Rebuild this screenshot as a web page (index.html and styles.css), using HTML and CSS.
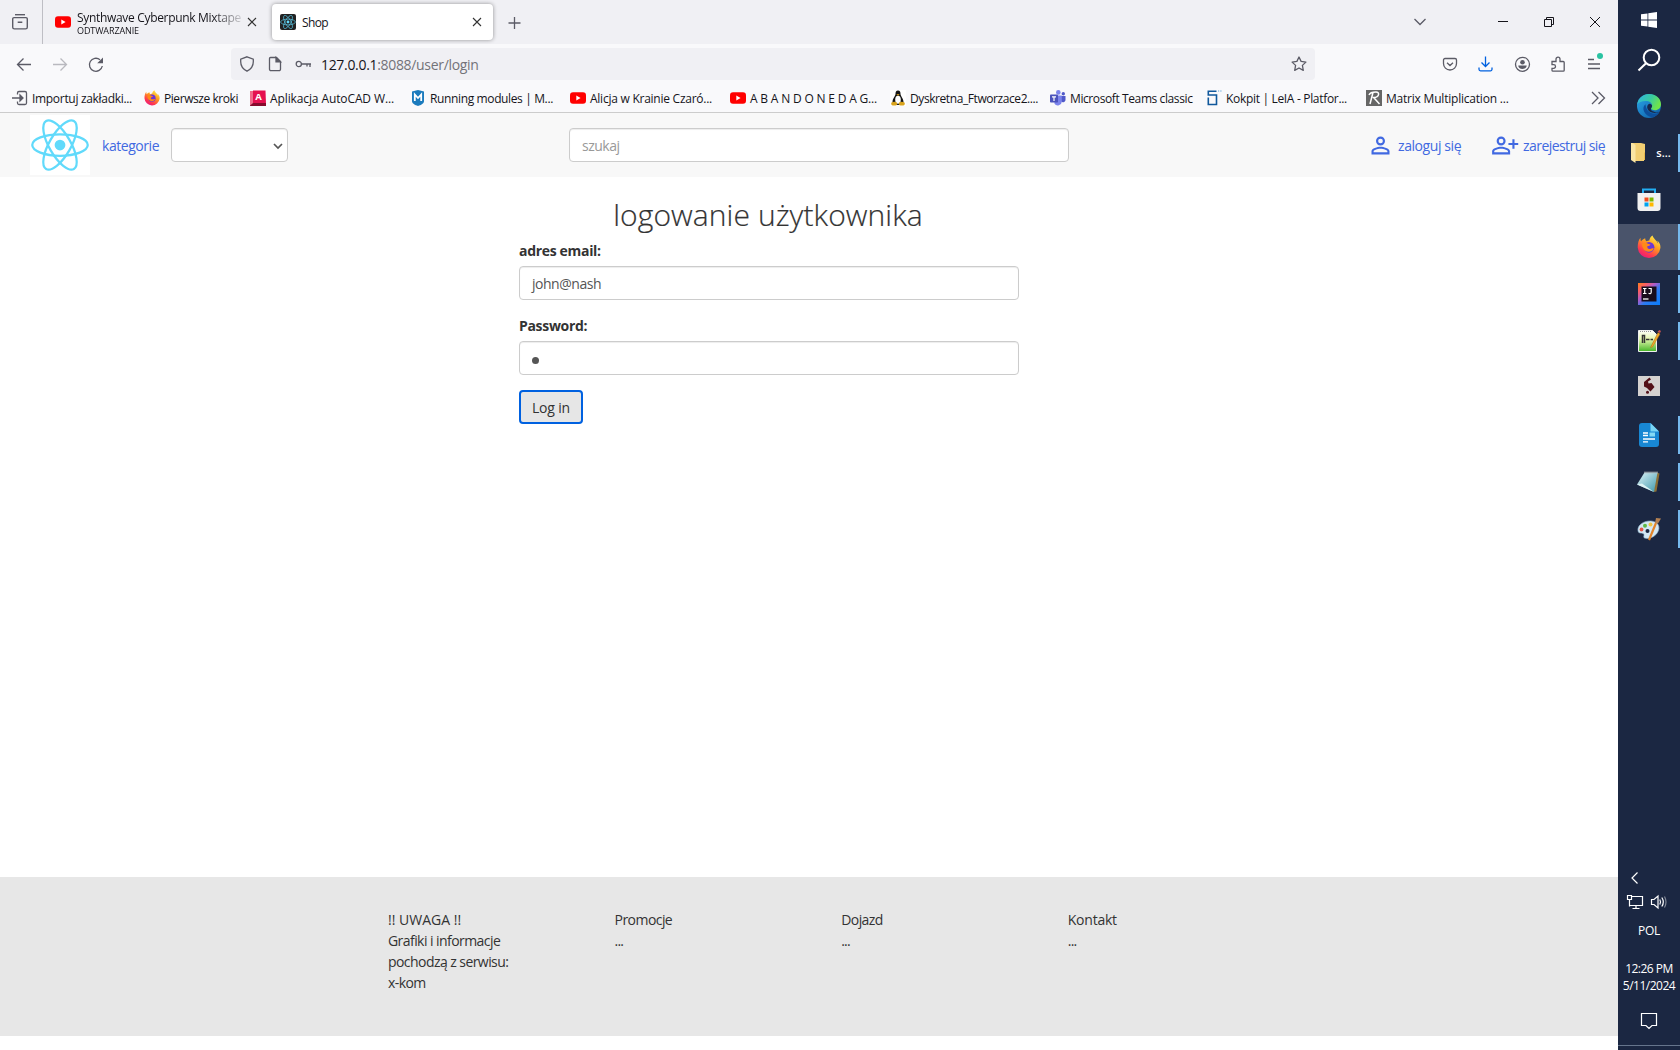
FILE: index.html
```html
<!DOCTYPE html>
<html lang="pl">
<head>
<meta charset="utf-8">
<title>Shop</title>
<link rel="stylesheet" href="styles.css">
</head>
<body>
<svg class="defs" width="0" height="0">
  <defs>
    <linearGradient id="ffOuter" x1=".8" y1="0" x2=".2" y2="1"><stop offset="0" stop-color="#fff44f"/><stop offset=".4" stop-color="#ff9a1f"/><stop offset=".75" stop-color="#ff3750"/><stop offset="1" stop-color="#e31587"/></linearGradient>
    <linearGradient id="edgeBlue" x1="0" y1="0" x2="1" y2="1"><stop offset="0" stop-color="#2aa7e8"/><stop offset="1" stop-color="#0c59a4"/></linearGradient>
    <linearGradient id="edgeGreen" x1="0" y1="0" x2="1" y2=".4"><stop offset="0" stop-color="#2fb4e6"/><stop offset=".6" stop-color="#3acb9d"/><stop offset="1" stop-color="#6fe34b"/></linearGradient>
    <linearGradient id="ijFrame" x1="0" y1="0" x2="1" y2="1"><stop offset="0" stop-color="#fc801d"/><stop offset=".2" stop-color="#fe5f60"/><stop offset=".4" stop-color="#b05bc8"/><stop offset=".6" stop-color="#2d7bf0"/><stop offset="1" stop-color="#087cfa"/></linearGradient>
    <linearGradient id="nppBg" x1="0" y1="0" x2="0" y2="1"><stop offset="0" stop-color="#fff"/><stop offset=".4" stop-color="#e6f7b0"/><stop offset="1" stop-color="#45b526"/></linearGradient>
    <linearGradient id="padBg" x1="0" y1="0" x2="1" y2="1"><stop offset="0" stop-color="#dff4f8"/><stop offset="1" stop-color="#3f99ad"/></linearGradient>
    <symbol id="youtube" viewBox="0 0 16 16"><rect y="2.300" width="16" height="11.400" rx="3" fill="#f00"/><path d="M6.300 5.500v5l4.300-2.500z" fill="#fff"/></symbol>
    <symbol id="close" viewBox="0 0 16 16"><path d="M4 4l8 8M12 4l-8 8" stroke="#333" stroke-width="1.100" fill="none"/></symbol>
    <symbol id="firefox" viewBox="0 0 24 24"><path d="M23 9.500c-.6-1.700-1.700-3.200-2.800-3.800.6 1.100.9 2.200 1 3C20 5.300 17 4.500 15.500.4c-2 1.200-3 3.200-3.200 5-1 0-2 .3-2.800.8-1-.7-1.400-2-1.300-3C6 4 4.800 5.300 4.200 6.200 3.600 5.700 3.400 4 3.500 2.800 1.600 4.700.7 8.500.7 12.500a11.400 11.400 0 0 0 22.700.5c.1-1.200 0-2.400-.4-3.500z" fill="url(#ffOuter)"/><circle cx="12" cy="12.300" r="5.400" fill="#6b37d6"/><path d="M5 9c2-1.800 4-1.700 6-.3l2.500.7c-.5 1.200-1.700 1.600-2.900 1.700-.8 1.500-.1 3 2.400 2.900 1.500 0 2.500-1 3.800-.5-1.100 2.500-3.200 3.500-5.700 3.200C7.500 16.300 5 13 5 9z" fill="#ff8a16"/></symbol>
    <symbol id="atom" viewBox="-12 -12 24 24"><circle r="2.150"/><g fill="none" stroke-width=".9"><ellipse rx="11.100" ry="4.300"/><ellipse rx="11.100" ry="4.300" transform="rotate(60)"/><ellipse rx="11.100" ry="4.300" transform="rotate(120)"/></g></symbol>
  </defs>
</svg>
<div class="screen">
  <div class="window">
    <header class="tabstrip">
      <div class="tabview"><svg width="18" height="18" viewBox="0 0 18 18"><path d="M4 1.700h10" /><path d="M3 4.600h12a1.300 1.300 0 0 1 1.300 1.300v8.300a1.700 1.700 0 0 1-1.700 1.700H3.400a1.700 1.700 0 0 1-1.700-1.700V5.900A1.300 1.300 0 0 1 3 4.600zM6.700 9.300h4.600"/></svg></div>
      <div class="tab">
        <svg class="i16"><use href="#youtube"/></svg>
        <div class="tab-text"><span class="tab-title">Synthwave Cyberpunk Mixtape</span><span class="tab-sub">ODTWARZANIE</span></div>
        <svg class="i16 tab-close"><use href="#close"/></svg>
      </div>
      <div class="tab active">
        <span class="favicon"><svg class="i16"><use href="#atom"/></svg></span>
        <span class="tab-name">Shop</span>
        <svg class="i16"><use href="#close"/></svg>
      </div>
      <svg class="newtab line" width="16" height="16" viewBox="0 0 16 16"><path d="M8.500 2v12M2.500 8h12"/></svg>
      <div class="wincontrols">
        <svg class="line" width="16" height="16" viewBox="0 0 16 16"><path d="M2.500 5l5.500 5.500L13.500 5"/></svg>
        <svg class="ctl" width="16" height="16" viewBox="0 0 16 16"><path d="M3 7.500h10"/></svg>
        <svg class="ctl" width="16" height="16" viewBox="0 0 16 16"><path d="M3.500 5.500h7v7h-7zM5.500 5.500v-2h7v7h-2"/></svg>
        <svg class="ctl" width="16" height="16" viewBox="0 0 16 16"><path d="M3 3l10 10M13 3L3 13"/></svg>
      </div>
    </header>
    <div class="toolbar">
      <div class="navbuttons">
        <svg class="line" width="16" height="16" viewBox="0 0 16 16"><path d="M15 8.500H1.500M7.500 2.500l-6 6 6 6"/></svg>
        <svg class="line faded" width="16" height="16" viewBox="0 0 16 16"><path d="M1 8.500h13.500M8.500 2.500l6 6-6 6"/></svg>
        <svg class="line" width="16" height="16" viewBox="0 0 16 16"><path d="M14.300 10A6.500 6.500 0 1 1 12 3.700"/><path d="M15 1.500v5.800H9.200z" fill="#5b5b66" stroke="none"/></svg>
      </div>
      <div class="urlbar">
        <svg class="line" width="16" height="16" viewBox="0 0 16 16"><path d="M8 .8l6.300 2.400v2.600c0 4-2.300 7.400-6.300 9.400-4-2-6.300-5.400-6.300-9.400V3.200z"/></svg>
        <svg class="line" width="16" height="16" viewBox="0 0 16 16"><path d="M3.500 1.500h6l4 4v7.700a1.500 1.500 0 0 1-1.500 1.500H4A1.500 1.500 0 0 1 2.500 13.200V2.500a1 1 0 0 1 1-1z"/><path d="M9 1.500v4.400h4.500z" fill="#5b5b66"/></svg>
        <svg class="line" width="18" height="16" viewBox="0 0 18 16"><circle cx="3.800" cy="8" r="2.600"/><path d="M6.400 8H16M15 8v3M12 8v2.500"/></svg>
        <span class="url"><b>127.0.0.1</b>:8088/user/login</span>
        <svg class="line star" width="16" height="16" viewBox="0 0 16 16"><path d="M8 1l2.100 4.400 4.800.7-3.500 3.300.9 5L8 12l-4.300 2.400.9-5L1.100 6.100l4.800-.7z" stroke-linejoin="round"/></svg>
      </div>
      <div class="actions">
        <svg class="line" width="16" height="16" viewBox="0 0 16 16"><path d="M3 2.500h10a1.500 1.500 0 0 1 1.500 1.500v3.500a6.500 6.500 0 0 1-13 0V4A1.500 1.500 0 0 1 3 2.500zM5 6.700l3 2.800 3-2.800"/></svg>
        <svg class="line blue" width="16" height="16" viewBox="0 0 16 16"><path d="M7.500.5v10M3.500 6.500l4 4 4-4M1 11.500v1.800a1.500 1.500 0 0 0 1.500 1.500h10a1.500 1.500 0 0 0 1.500-1.500v-1.800"/></svg>
        <svg class="line" width="16" height="16" viewBox="0 0 16 16"><circle cx="8.500" cy="8.300" r="7"/><circle cx="8.500" cy="6.200" r="2.300" fill="#5b5b66" stroke="none"/><path d="M4.300 9.600h8.400c0 2-1.700 3.500-4.200 3.500s-4.200-1.500-4.200-3.500z" fill="#5b5b66" stroke="none"/></svg>
        <svg class="line" width="16" height="16" viewBox="0 0 16 16"><path d="M2 5.500h4V3.200a2 2 0 0 1 4 0v2.300h3.200a1 1 0 0 1 1 1v7.700a1 1 0 0 1-1 1H3a1 1 0 0 1-1-1v-1.900h1.700a1.800 1.800 0 0 0 0-3.600H2z"/></svg>
        <span class="menu"><svg class="line" width="16" height="16" viewBox="0 0 16 16"><path d="M2 3.500h6M2 8h12M2 12.500h12"/></svg><i></i></span>
      </div>
    </div>
    <nav class="bookmarks">
      <span class="bm b1"><svg class="i16 line" viewBox="0 0 16 16"><path d="M5.500 4.500V3A1.500 1.500 0 0 1 7 1.500h6A1.500 1.500 0 0 1 14.500 3v10a1.500 1.500 0 0 1-1.500 1.500H7A1.500 1.500 0 0 1 5.500 13v-1.500M0 8h10.500"/><path d="M8 5l3 3-3 3z" fill="#5b5b66"/></svg><span>Importuj zakładki...</span></span>
      <span class="bm b2"><svg class="i16"><use href="#firefox"/></svg><span>Pierwsze kroki</span></span>
      <span class="bm b3"><svg class="i16" viewBox="0 0 16 16"><path d="M0 1h3.500v12L0 16z" fill="#f06a8b"/><path d="M3 .5h12.500L16 14H3z" fill="#e51050"/><path d="M0 15.500L3 13h13v3H0z" fill="#860a2c"/><text x="5.300" y="10" class="acad">A</text></svg><span>Aplikacja AutoCAD W...</span></span>
      <span class="bm b4"><svg class="i16" viewBox="0 0 16 16"><path d="M2 1.500L8 0l6 1.500V11c0 2.500-3 4-6 5-3-1-6-2.500-6-5z" fill="#1b7bbd"/><path d="M4.800 11V4.500L8 8l3.200-3.500V11" fill="none" stroke="#fff" stroke-width="1.800"/></svg><span>Running modules | M...</span></span>
      <span class="bm b5"><svg class="i16"><use href="#youtube"/></svg><span>Alicja w Krainie Czaró...</span></span>
      <span class="bm b6"><svg class="i16"><use href="#youtube"/></svg><span>A B A N D O N E D A G...</span></span>
      <span class="bm b7"><svg class="i16" viewBox="0 0 16 16"><path fill="#fff" d="M0 0h16v16H0z"/><path d="M8 .5c2 0 2.500 1.500 2.500 3.500 0 2 3 4.500 3 8 0 2-2 3-5.500 3s-5.500-1-5.500-3c0-3.500 3-6 3-8S6 .5 8 .5z" fill="#151515"/><ellipse cx="8" cy="9.700" rx="2.800" ry="4" fill="#fff"/><path d="M6.300 4.200h3.400L8 5.800z" fill="#f3b21b"/><ellipse cx="4.200" cy="13.700" rx="3" ry="1.900" fill="#d9a31c"/><ellipse cx="11.800" cy="13.700" rx="3" ry="1.900" fill="#d9a31c"/></svg><span>Dyskretna_Ftworzace2....</span></span>
      <span class="bm b8"><svg class="i16" viewBox="0 0 16 16"><circle cx="13.300" cy="3.800" r="1.700" fill="#5059c9"/><circle cx="8.300" cy="2.400" r="2.300" fill="#7b83eb"/><path d="M11 6h4.500v4.200a2.500 2.500 0 0 1-4.500 1z" fill="#5059c9"/><path d="M4.500 5.500h7.300v6.200a4 4 0 0 1-7.300 2z" fill="#7b83eb"/><rect y="4.500" width="8" height="8" rx=".8" fill="#4b53bc"/><path d="M2 6.800h4M4 6.800v4.200" stroke="#fff" stroke-width="1.200"/></svg><span>Microsoft Teams classic</span></span>
      <span class="bm b9"><svg class="i16" viewBox="0 0 16 16"><path d="M10.500 1.300H2.300V5h8.200v9.500H2.300V7.500" fill="none" stroke="#10589c" stroke-width="1.600"/><path d="M12 1h1.200M14.300 1h1.200" stroke="#5aa2d6"/></svg><span>Kokpit | LeIA - Platfor...</span></span>
      <span class="bm b10"><svg class="i16" viewBox="0 0 16 16"><path fill="#666" d="M0 0h16v16H0z"/><path d="M3 5c1-2.500 4-3 7-3 4 0 3.500 5-2.300 5.600L13.500 14M7 2.500L4 14" fill="none" stroke="#fff" stroke-width="1.500"/></svg><span>Matrix Multiplication ...</span></span>
      <svg class="line more" width="16" height="16" viewBox="0 0 16 16"><path d="M2 2l6 6-6 6M8.500 2l6 6-6 6"/></svg>
    </nav>
    <div class="page">
      <nav class="shopnav">
        <span class="logo"><svg width="60" height="60"><use href="#atom"/></svg></span>
        <a class="cat">kategorie</a>
        <span class="select"><svg width="10" height="8" viewBox="0 0 10 8"><path d="M1 2l4 4 4-4" fill="none" stroke="#555" stroke-width="1.700"/></svg></span>
        <span class="field search">szukaj</span>
        <a class="login"><svg width="27" height="27" viewBox="0 0 24 24"><path d="M12 5.900a2.100 2.100 0 1 1 0 4.200 2.100 2.100 0 0 1 0-4.200m0 9c2.970 0 6.100 1.460 6.100 2.100v1.100H5.900V17c0-.64 3.130-2.100 6.100-2.100M12 4C9.790 4 8 5.790 8 8s1.790 4 4 4 4-1.790 4-4-1.790-4-4-4zm0 9c-2.670 0-8 1.340-8 4v3h16v-3c0-2.660-5.330-4-8-4z"/></svg><span>zaloguj się</span></a>
        <a class="register"><svg width="27" height="27" viewBox="0 0 24 24"><path d="M9 5.900a2.100 2.100 0 1 1 0 4.200 2.100 2.100 0 0 1 0-4.200m0 9c2.970 0 6.100 1.460 6.100 2.100v1.100H2.900V17c0-.64 3.130-2.100 6.100-2.100M9 4C6.790 4 5 5.790 5 8s1.790 4 4 4 4-1.790 4-4-1.790-4-4-4zm0 9c-2.670 0-8 1.340-8 4v3h16v-3c0-2.660-5.330-4-8-4zM19 6.500v3.200h-3.500v1.900H19v3.200h1.900v-3.200h3.300V9.700h-3.300V6.500z"/></svg><span>zarejestruj się</span></a>
      </nav>
      <main>
        <form class="loginform">
          <h2>logowanie użytkownika</h2>
          <label>adres email:</label>
          <div class="field email">john@nash</div>
          <label class="second">Password:</label>
          <div class="field"><i class="dot"></i></div>
          <div class="btn">Log in</div>
        </form>
      </main>
      <footer>
        <div><p class="notice">!! UWAGA !!</p><p>Grafiki i informacje</p><p>pochodzą z serwisu:</p><p>x-kom</p></div>
        <div><p>Promocje</p><p class="dots">...</p></div>
        <div><p>Dojazd</p><p class="dots">...</p></div>
        <div><p class="contact">Kontakt</p><p class="dots">...</p></div>
      </footer>
    </div>
  </div>
  <aside class="taskbar">
    <span class="s-win"><svg width="16" height="16" viewBox="0 0 16 16"><path d="M0 2.300l6.500-.9v6.100H0zM7.300 1.300L16 0v7.500H7.300zM0 8.400h6.500v6.200L0 13.700zM7.300 8.400H16V16l-8.700-1.200z" fill="#fff"/></svg></span>
    <span class="s-search"><svg width="24" height="24" viewBox="0 0 24 24"><circle cx="14.500" cy="9.500" r="7.800"/><path d="M9 15.200L1.500 22.500"/></svg></span>
    <span class="s-edge"><svg width="24" height="24" viewBox="0 0 24 24"><circle cx="12" cy="12" r="12" fill="url(#edgeBlue)"/><path d="M.2 10.500C1 4.500 6 0 12 0c7 0 12 4.800 12 10.300 0 3.700-2.800 6-6 6-2.500 0-4-1-4-1.700 0-.6 1.100-1.300 1.100-3C15.100 9 12.500 7 8.700 7 4.500 7 1.500 8.500.2 10.500z" fill="url(#edgeGreen)"/><path d="M8.500 10.300C4 13.500 7 22 15.500 23.400c3-.8 5.300-2.600 6.700-4.900-6 3-13 .3-13.700-8.200z" fill="#0d4f9c"/><path d="M12.200 9.700c-4 2.300-2 8.700 5.300 9.300 2.200 0 4-.5 5-1.200-.7 0-1.800.6-3.500.4-3.500-.3-5.700-2.200-5-3.600.6-.9 1.100-1.500 1.100-3-.3-1-1.500-1.900-2.900-1.900z" fill="#17284b"/></svg></span>
    <span class="slot on folder"><svg width="15" height="20" viewBox="0 0 15 20"><path d="M3 1h11v16H3z" fill="#e8b94c"/><path d="M0 0h10l4 1v8l-1 1v8H4z" fill="#f3cf72"/><path d="M0 0h1.500l3 2v18L0 17z" fill="#fbe6a4"/></svg><b>s...</b></span>
    <span class="slot"><svg width="24" height="24" viewBox="0 0 24 24"><path d="M6 5.500V1.500h12v4" fill="none" stroke="#22aef2" stroke-width="2"/><path d="M.5 5h23v15a3 3 0 0 1-3 3h-17a3 3 0 0 1-3-3z" fill="#f1f1f1"/><path fill="#f04e1f" d="M7.500 9.500h4v4h-4z"/><path fill="#7db900" d="M12.500 9.500h4v4h-4z"/><path fill="#00a3ee" d="M7.500 14.500h4v4h-4z"/><path fill="#ffb800" d="M12.500 14.500h4v4h-4z"/></svg></span>
    <span class="slot on current"><svg width="24" height="24"><use href="#firefox"/></svg></span>
    <span class="slot on"><svg width="22" height="22" viewBox="0 0 22 22"><path fill="url(#ijFrame)" d="M0 0h22v22H0z"/><path d="M3.500 3.500h15v15h-15z" fill="#170d1c"/><path d="M5 5.500h3.500M6.700 5.500v5M5 10.500h3.500M10.500 5.500h2.700v3.800c0 1.500-1.500 1.500-2.700 1" stroke="#fff" stroke-width="1.200" fill="none"/><path d="M5 16h5.500" stroke="#ddd" stroke-width="1.500"/></svg></span>
    <span class="slot on"><svg width="24" height="24" viewBox="0 0 24 24"><path d="M1.500 1.500h14l4 4v17h-18z" fill="url(#nppBg)" stroke="#eee"/><path d="M3 2.500h12" stroke="#999" stroke-dasharray="1 1"/><path d="M5.500 14V6.500h2V14M9 10.500h3.500M13.500 10.500H16" stroke="#333" stroke-width="1.500" fill="none"/><path d="M13.500 18.500l7.500-15 2 1.500-7.500 13z" fill="#f0a928" stroke="#ad6c16" stroke-width=".5"/><path d="M20.500 2.500l2.500 1.500 1-2-1.500-1z" fill="#c55353"/></svg></span>
    <span class="slot script"><svg width="22" height="20" viewBox="0 0 22 20"><path fill="#d5d2d0" d="M0 0h22v20H0z"/><path d="M11.500 1.500l1.500 2-3 2 .5 2 3-.5 3 4-4 4.500-3.500-3.500-3-1.500V6z" fill="#531017"/><circle cx="9.500" cy="16.300" r="1.500" fill="#531017"/></svg></span>
    <span class="slot on"><svg width="20" height="24" viewBox="0 0 20 24"><path d="M3 0h8.500L20 8.500V21a3 3 0 0 1-3 3H3a3 3 0 0 1-3-3V3a3 3 0 0 1 3-3z" fill="#1887d3"/><path d="M11.500 0L20 8.500h-8.500z" fill="#79d5f5"/><path d="M4 10h5M4 12.500h5M4 16h12M4 18.800h5" stroke="#fff" stroke-width="1.300"/><path fill="#83d9f5" d="M10.500 9.500H16v4h-5.500z"/></svg></span>
    <span class="slot on"><svg width="24" height="24" viewBox="0 0 24 24"><path d="M19.500 2.500l3 1-3 18-3 .5z" fill="#8b6e35"/><path d="M7.500 2.500h13L17 22 0 14.500z" fill="url(#padBg)"/><path d="M0 14.500l5-1L17 22z" fill="#def2f4"/><path d="M7.500 2.500h13" stroke="#bbb" stroke-width="2" stroke-dasharray="1 1"/></svg></span>
    <span class="slot on"><svg width="24" height="24" viewBox="0 0 24 24"><path d="M1 14C0 8 7 3.500 14 4c7 .4 10 6 6.500 11.500-3 5-9.500 7-13 5.500-2-1 1-3.700-1.500-4.500-2-.5-4.500 0-5-2.500z" fill="#d3e8f4" stroke="#8fb4cd" stroke-width=".6"/><circle cx="4.500" cy="12.500" r="1.900" fill="#e45749"/><circle cx="8" cy="8.700" r="2" fill="#5fb946"/><circle cx="13.500" cy="7.500" r="2" fill="#efc444"/><circle cx="10.500" cy="14" r="2" fill="#1b2742"/><path d="M12 23l7-17" stroke="#e2852b" stroke-width="2.200"/><path d="M18 6l1-5 5 .5-3 5z" fill="#b28052"/></svg></span>
    <div class="tray">
      <svg width="62" height="14" viewBox="0 0 62 14"><path d="M19.500 1.500L14 7l5.500 5.500"/></svg>
      <svg class="sys" width="62" height="16" viewBox="0 0 62 16"><path d="M9.500 1.500h4v4h-4zM11.500 5.500v7M14 2.500h10.500v9H12M18 12v2.500M14.500 14.500h7"/><path d="M33.500 5.500h2.500l4-3.500v12l-4-3.500h-2.500z"/><path d="M41.800 5.500q1.500 2.500 0 5M43.800 3.500q3 4.500 0 9"/><path d="M46.500 2.500q3 5.500 0 11" opacity=".45"/></svg>
      <span class="lang">POL</span>
      <span class="clock">12:26 PM</span>
      <span class="clock">5/11/2024</span>
      <svg class="notify" width="18" height="18" viewBox="0 0 18 18"><path d="M1.500 1.500h15v12H12l-3 3-3-3H1.500z"/></svg>
    </div>
    <div class="showdesktop"></div>
  </aside>
</div>
</body>
</html>
```
FILE: styles.css
```css
* { box-sizing: border-box; }
body { margin: 0; font-family: "Open Sans", "Noto Sans", sans-serif; font-size: 12px; color: #15141a; white-space: nowrap; }
p, h2 { margin: 0; }
svg { display: block; flex: none; overflow: visible; }
.defs { position: absolute; }
.i16 { width: 16px; height: 16px; }
.line { fill: none; stroke: #5b5b66; stroke-width: 1.3; }
.screen { display: flex; width: 1680px; height: 1050px; overflow: hidden; }
.window { width: 1618px; display: flex; flex-direction: column; background: #fff; }

.tabstrip { height: 44px; background: #f0f0f4; display: flex; align-items: center; }
.tabview { width: 43px; height: 44px; padding: 13px 0 0 11px; border-right: 1px solid #bebec4; }
.tabview svg { fill: none; stroke: #5b5b66; stroke-width: 1.4; }
.tab { width: 221px; height: 36px; display: flex; align-items: center; padding-left: 12px; }
.tab-text { display: flex; flex-direction: column; width: 164px; margin: 2px 3px 0 6px; overflow: hidden; -webkit-mask-image: linear-gradient(90deg, #000 135px, transparent 170px); mask-image: linear-gradient(90deg, #000 135px, transparent 170px); }
.tab-title { font-size: 12px; line-height: 15px; letter-spacing: -.32px; }
.tab-sub { font-size: 9px; line-height: 12px; letter-spacing: -.11px; }
.tab.active { margin-left: 8px; padding-left: 8px; background: #fff; border-radius: 4px; box-shadow: 0 0 4px rgba(0,0,0,.4); }
.favicon { background: #222; border-radius: 2px; fill: #61dafb; stroke: #61dafb; stroke-width: 0; }
.tab-name { margin: 1px 0 0 6px; width: 167px; letter-spacing: -.6px; }
.newtab { margin: 1px 0 0 13px; }
.wincontrols { margin-left: auto; display: flex; padding-right: 15px; gap: 30px; }
.wincontrols .line { margin-right: 37px; }
.ctl { fill: none; stroke: #15141a; stroke-width: 1; }

.toolbar { height: 40px; background: #f9f9fb; display: flex; align-items: center; }
.navbuttons { width: 231px; padding-left: 16px; display: flex; gap: 20px; }
.faded { opacity: .4; }
.urlbar { width: 1084px; height: 32px; background: #f0f0f4; border-radius: 4px; display: flex; align-items: center; gap: 12px; padding: 0 8px; }
.url { font-size: 14px; color: #737379; margin: 1px 0 0 -4px; letter-spacing: -.32px; }
.url b { font-weight: 400; color: #15141a; }
.star { margin-left: auto; }
.actions { margin-left: 127px; display: flex; gap: 20px; }
.blue { stroke: #0061e0; }
.menu { position: relative; }
.menu i { position: absolute; right: -1px; top: -3px; width: 6px; height: 6px; border-radius: 50%; background: #2ac3a2; }

.bookmarks { height: 29px; background: #f9f9fb; border-bottom: 1px solid #ccc; display: flex; align-items: center; padding-left: 12px; }
.bm { display: flex; align-items: center; gap: 4px; height: 28px; }
.bm > span { margin-top: 1px; }
.b1 { width: 132px; letter-spacing: -.31px; }
.b2 { width: 106px; letter-spacing: -.44px; }
.b3 { width: 160px; letter-spacing: -.11px; }
.b4 { width: 160px; letter-spacing: -.37px; }
.b5 { width: 160px; letter-spacing: -.25px; }
.b6 { width: 160px; letter-spacing: -.18px; }
.b7 { width: 160px; letter-spacing: -.42px; }
.b8 { width: 156px; letter-spacing: -.4px; }
.b9 { width: 160px; letter-spacing: -.32px; }
.b10 { width: 145px; letter-spacing: -.21px; }
.acad { font: 700 9.5px "Open Sans", sans-serif; fill: #fff; }
.more { margin: 0 12px 0 auto; }

.page { flex: 1; display: flex; flex-direction: column; font-size: 14px; color: #333; }
.shopnav { height: 64px; background: #f8f8f8; display: flex; align-items: center; padding: 0 10px 0 30px; color: #4169e1; }
.logo { width: 60px; height: 60px; background: #fff; fill: #61dafb; stroke: #61dafb; stroke-width: 0; }
.cat { margin: 0 0 0 12px; width: 57px; letter-spacing: -.45px; }
.select { width: 117px; height: 34px; margin-left: 12px; border: 1px solid #ccc; border-radius: 4px; background: #fff; box-shadow: inset 0 1px 1px rgba(0,0,0,.075); display: flex; align-items: center; justify-content: flex-end; padding: 1px 4px 0 0; }
.field { height: 34px; border: 1px solid #ccc; border-radius: 4px; background: #fff; box-shadow: inset 0 1px 1px rgba(0,0,0,.075); display: flex; align-items: center; padding: 1px 12px 0; color: #555; }
.email { letter-spacing: -.48px; }
.search { width: 500px; margin-left: 281px; color: #999; letter-spacing: -.5px; }
.login, .register { display: flex; align-items: center; }
.shopnav a svg { fill: #4169e1; }
.login { margin-left: 298px; gap: 4px; width: 124px; letter-spacing: -.42px; }
.register { gap: 5px; letter-spacing: -.56px; }

main { flex: 1; display: flex; }
.loginform { width: 500px; margin-left: 519px; display: flex; flex-direction: column; }
h2 { font-size: 30px; font-weight: 350; line-height: 33px; margin: 21px 0 9px; padding-right: 2px; text-align: center; letter-spacing: .08px; -webkit-text-stroke: .2px #333; }
label { font-weight: 700; line-height: 20px; margin: 1px 0 5px; letter-spacing: -.32px; }
label.second { margin-top: 16px; }
.dot { width: 7px; height: 7px; border-radius: 50%; background: #555; margin: 3px 0 0; }
.btn { width: 64px; height: 34px; margin-top: 15px; padding-top: 1px; border: 2px solid #0061e0; border-radius: 4px; background: #e6e6e6; display: flex; align-items: center; justify-content: center; letter-spacing: -.18px; }
footer { height: 159px; margin-bottom: 14px; background: #e7e7e7; display: flex; padding: 32px 0 0 388px; line-height: 21px; letter-spacing: -.56px; }
footer div { width: 226.6px; display: flex; flex-direction: column; align-items: flex-start; }
.notice { letter-spacing: 0; }
.contact { letter-spacing: -.24px; }
.dots { letter-spacing: -.8px; }

.taskbar { width: 62px; background: #1b2742; display: flex; flex-direction: column; color: #fff; }
.taskbar > span { display: flex; align-items: center; justify-content: center; }
.s-win { height: 40px; }
.s-search { height: 40px; fill: none; stroke: #fff; stroke-width: 2; }
.s-edge { height: 50px; padding-top: 2px; }
.slot { height: 47px; position: relative; padding-bottom: 2px; }
.slot.on::after { content: ""; position: absolute; right: 0; top: 4px; width: 2px; height: 38px; background: #76b9ed; }
.slot.current { background: linear-gradient(#4a546b, #4a546b) 0 0 / 100% 46px no-repeat; }
.slot.current::after { top: 0; height: 46px; }
.slot.script { padding-bottom: 5px; }
.folder { gap: 10px; padding-left: 4px; }
.folder b { font-size: 11px; font-weight: 600; }
.tray { margin-top: auto; height: 174px; display: flex; flex-direction: column; align-items: center; }
.tray svg { fill: none; stroke: #fff; stroke-width: 1.2; }
.sys { margin-top: 9px; }
.lang { margin-top: 13px; height: 16px; line-height: 16px; margin-bottom: 21px; letter-spacing: -.2px; }
.clock { line-height: 17px; letter-spacing: -.5px; }
.notify { margin-top: 18px; }
.showdesktop { height: 5px; border-top: 1px solid #66758c; }
```
